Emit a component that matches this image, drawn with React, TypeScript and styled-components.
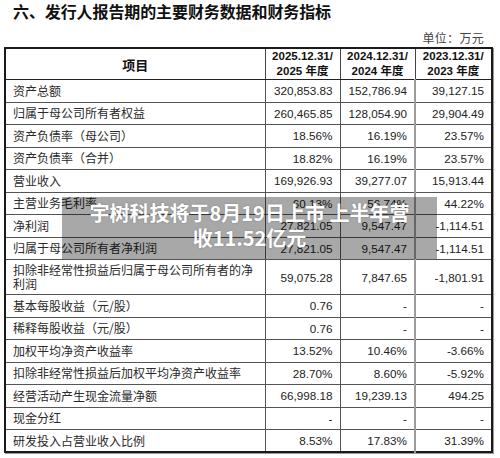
import React from "react";
import styled, { createGlobalStyle } from "styled-components";

const GlobalStyle = createGlobalStyle`
  html, body {
    margin: 0;
    padding: 0;
    background: #ffffff;
  }
  body {
    font-family: "Noto Sans CJK SC", "Noto Sans", sans-serif;
    color: #222;
  }
`;

const Page = styled.div`
  width: 500px;
  height: 458px;
  box-sizing: border-box;
  padding: 0 9px 0 4px;
  overflow: hidden;
`;

const Title = styled.h1`
  margin: 0;
  padding: 0 0 0 9px;
  font-size: 16px;
  line-height: 22px;
  font-weight: 700;
  color: #111;
  letter-spacing: -0.1px;
`;

const Unit = styled.div`
  margin-top: 9px;
  padding-right: 7px;
  text-align: right;
  font-size: 12px;
  line-height: 14px;
  color: #444;
  letter-spacing: 0.3px;
`;

const TableWrap = styled.div`
  position: relative;
  margin-top: 2px;
`;

const Table = styled.table`
  width: 487px;
  table-layout: fixed;
  border-collapse: collapse;
  border: 2px solid #1a1a1a;
  box-shadow: 1px 1px 0 #9a9a9a;
`;

const HeadCell = styled.th<{ $first?: boolean }>`
  height: 30px;
  padding: 0;
  border: 1px solid #444;
  border-bottom: 1.5px solid #222;
  text-align: center;
  vertical-align: middle;
  font-weight: 700;
  color: #111;
  font-size: ${(p) => (p.$first ? "13px" : "11.5px")};
  line-height: 15px;
  font-family: ${(p) =>
    p.$first
      ? `"Noto Sans CJK SC", sans-serif`
      : `"Liberation Sans", "Noto Sans CJK SC", sans-serif`};
`;

const Row = styled.tr<{ $tall?: boolean }>`
  height: ${(p) => (p.$tall ? "35px" : "22.5px")};
`;

const Label = styled.td`
  padding: 0 6px 0 7px;
  border: 1px solid #555;
  font-size: 12px;
  line-height: 14px;
  color: #2a2a2a;
  vertical-align: middle;
`;

const Num = styled.td<{ $soft?: boolean }>`
  padding: 0 7px 0 0;
  border: 1px solid #555;
  border-left: ${(p) => (p.$soft ? "2px solid #9c9c9c" : "1px solid #555")};
  text-align: right;
  font-family: "Liberation Sans", Arial, sans-serif;
  font-size: 11.7px;
  color: #222;
  vertical-align: middle;
  white-space: nowrap;
`;

const Banner = styled.div`
  position: absolute;
  left: 58px;
  top: 150px;
  width: 375px;
  height: 62px;
  box-sizing: border-box;
  padding-top: 3px;
  background: rgba(0, 0, 0, 0.34);
  color: #fff;
  text-align: center;
  font-size: 20px;
  line-height: 25px;
  font-weight: 700;
  text-shadow: 0 0 2px rgba(0, 0, 0, 0.25);
`;

type Item = { label: string; v: [string, string, string]; tall?: boolean };

const rows: Item[] = [
  { label: "资产总额", v: ["320,853.83", "152,786.94", "39,127.15"] },
  { label: "归属于母公司所有者权益", v: ["260,465.85", "128,054.90", "29,904.49"] },
  { label: "资产负债率（母公司）", v: ["18.56%", "16.19%", "23.57%"] },
  { label: "资产负债率（合并）", v: ["18.82%", "16.19%", "23.57%"] },
  { label: "营业收入", v: ["169,926.93", "39,277.07", "15,913.44"] },
  { label: "主营业务毛利率", v: ["60.13%", "56.74%", "44.22%"] },
  { label: "净利润", v: ["27,821.05", "9,547.47", "-1,114.51"] },
  { label: "归属于母公司所有者净利润", v: ["27,821.05", "9,547.47", "-1,114.51"] },
  {
    label: "扣除非经常性损益后归属于母公司所有者的净利润",
    v: ["59,075.28", "7,847.65", "-1,801.91"],
    tall: true,
  },
  { label: "基本每股收益（元/股）", v: ["0.76", "-", "-"] },
  { label: "稀释每股收益（元/股）", v: ["0.76", "-", "-"] },
  { label: "加权平均净资产收益率", v: ["13.52%", "10.46%", "-3.66%"] },
  { label: "扣除非经常性损益后加权平均净资产收益率", v: ["28.70%", "8.60%", "-5.92%"] },
  { label: "经营活动产生现金流量净额", v: ["66,998.18", "19,239.13", "494.25"] },
  { label: "现金分红", v: ["-", "-", "-"] },
  { label: "研发投入占营业收入比例", v: ["8.53%", "17.83%", "31.39%"] },
];

const years = ["2025", "2024", "2023"];

const App: React.FC = () => {
  return (
    <>
      <GlobalStyle />
      <Page>
        <Title>六、发行人报告期的主要财务数据和财务指标</Title>
        <Unit>单位：万元</Unit>
        <TableWrap>
          <Table>
            <colgroup>
              <col style={{ width: 260 }} />
              <col style={{ width: 75 }} />
              <col style={{ width: 75 }} />
              <col style={{ width: 77 }} />
            </colgroup>
            <thead>
              <tr>
                <HeadCell $first>项目</HeadCell>
                {years.map((y) => (
                  <HeadCell key={y}>
                    {y}.12.31/
                    <br />
                    {y} 年度
                  </HeadCell>
                ))}
              </tr>
            </thead>
            <tbody>
              {rows.map((r) => (
                <Row key={r.label} $tall={r.tall}>
                  <Label>{r.label}</Label>
                  <Num>{r.v[0]}</Num>
                  <Num>{r.v[1]}</Num>
                  <Num $soft>{r.v[2]}</Num>
                </Row>
              ))}
            </tbody>
          </Table>
          <Banner>
            宇树科技将于8月19日上市 上半年营
            <br />
            收11.52亿元
          </Banner>
        </TableWrap>
      </Page>
    </>
  );
};

export default App;
